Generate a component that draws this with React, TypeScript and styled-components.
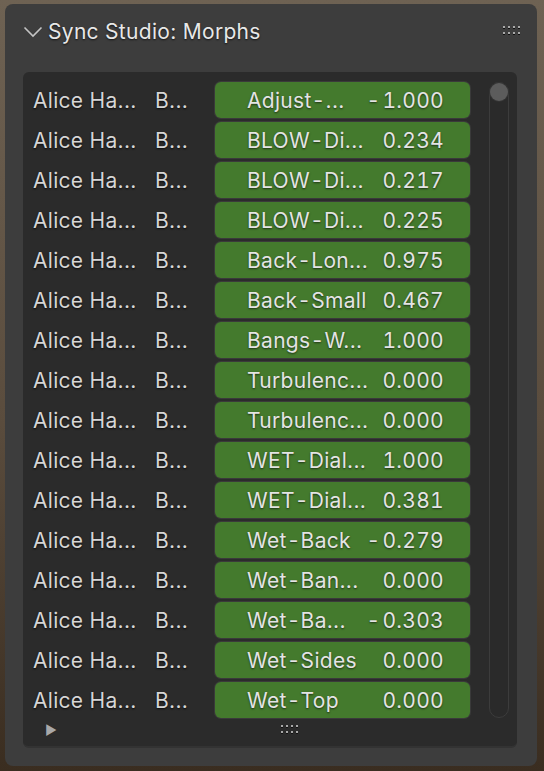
import React from 'react';
import styled, { createGlobalStyle } from 'styled-components';

type Morph = {
  name: string;
  value: string;
};

const morphs: Morph[] = [
  { name: 'Adjust-...', value: '-1.000' },
  { name: 'BLOW-Di...', value: '0.234' },
  { name: 'BLOW-Di...', value: '0.217' },
  { name: 'BLOW-Di...', value: '0.225' },
  { name: 'Back-Lon...', value: '0.975' },
  { name: 'Back-Small', value: '0.467' },
  { name: 'Bangs-W...', value: '1.000' },
  { name: 'Turbulenc...', value: '0.000' },
  { name: 'Turbulenc...', value: '0.000' },
  { name: 'WET-Dial...', value: '1.000' },
  { name: 'WET-Dial...', value: '0.381' },
  { name: 'Wet-Back', value: '-0.279' },
  { name: 'Wet-Ban...', value: '0.000' },
  { name: 'Wet-Ba...', value: '-0.303' },
  { name: 'Wet-Sides', value: '0.000' },
  { name: 'Wet-Top', value: '0.000' },
];

// Blender draws hyphens with a little extra room on both sides
const spaced = (text: string) =>
  text.split('-').map((part, i) => (
    <React.Fragment key={i}>
      {i > 0 && <Dash>-</Dash>}
      {part}
    </React.Fragment>
  ));

const GripDots: React.FC<{ cols: number }> = ({ cols }) => (
  <Grip>
    {Array.from({ length: cols * 2 }).map((_, i) => (
      <Dot key={i} />
    ))}
  </Grip>
);

const App: React.FC = () => {
  return (
    <>
      <GlobalStyle />
      <Panel>
        <Header>
          <Chevron width="20" height="12" viewBox="0 0 20 12">
            <polyline points="1.5,1.5 10,10 18.5,1.5" fill="none" stroke="#c4c4c4" strokeWidth="1.6" />
          </Chevron>
          <Title>Sync Studio: Morphs</Title>
          <GripDots cols={4} />
        </Header>
        <ListBox>
          <ListBody>
            <Rows>
              {morphs.map((m, i) => (
                <Row key={i}>
                  <Label>Alice Ha...</Label>
                  <Label>B...</Label>
                  <Slider>
                    <span>{spaced(m.name)}</span>
                    <Value>{spaced(m.value)}</Value>
                  </Slider>
                </Row>
              ))}
            </Rows>
            <ScrollTrack>
              <ScrollThumb />
            </ScrollTrack>
          </ListBody>
          <Footer>
            <Expand>▶</Expand>
            <GripDots cols={4} />
          </Footer>
        </ListBox>
      </Panel>
    </>
  );
};

const GlobalStyle = createGlobalStyle`
  html, body {
    margin: 0;
    padding: 0;
  }
  body {
    width: 544px;
    height: 771px;
    overflow: hidden;
    background: linear-gradient(180deg, #6e6253 0%, #5a4c3d 55%, #3a2d20 100%);
    font-family: Inter, "Noto Sans", sans-serif;
  }
`;

const Panel = styled.div`
  box-sizing: border-box;
  margin: 4px 0 0 5px;
  width: 532px;
  height: 762px;
  background: #3d3d3d;
  border-radius: 8px;
  padding: 0 20px 0 18px;
  display: flex;
  flex-direction: column;
`;

const Header = styled.div`
  height: 54px;
  display: flex;
  align-items: center;
  gap: 5px;
`;

const Chevron = styled.svg`
  margin-top: 2px;
  flex: none;
`;

const Title = styled.div`
  flex: 1;
  font-size: 21px;
  letter-spacing: 0.3px;
  color: #e8e8e8;
  text-shadow: 0 1px 2px rgba(0, 0, 0, 0.7);
`;

const Grip = styled.div`
  display: grid;
  grid-template-columns: repeat(4, 2px);
  column-gap: 3px;
  row-gap: 4px;
  margin-right: -3px;
  margin-top: -2px;
`;

const Dot = styled.span`
  width: 2px;
  height: 2px;
  background: #a8a8a8;
  box-shadow: 0 1px 0 #111;
`;

const ListBox = styled.div`
  margin-top: 14px;
  height: 676px;
  box-sizing: border-box;
  background: #2b2b2b;
  border-radius: 6px;
  border-bottom: 2px solid #333333;
  display: flex;
  flex-direction: column;
  padding: 10px 8px 0 10px;
`;

const ListBody = styled.div`
  display: flex;
  gap: 19px;
`;

const Rows = styled.div`
  flex: 1;
  display: flex;
  flex-direction: column;
  gap: 4px;
`;

const Row = styled.div`
  height: 36px;
  display: grid;
  grid-template-columns: 122px 60px 255px;
  align-items: center;
`;

const Label = styled.span`
  font-size: 21px;
  letter-spacing: 0.3px;
  color: #d6d6d6;
  text-shadow: 0 1px 2px rgba(0, 0, 0, 0.8);
  white-space: nowrap;
`;

const Slider = styled.div`
  box-sizing: border-box;
  height: 36px;
  background: #447a2d;
  border-radius: 6px;
  box-shadow: 0 0 0 1px #3a3a3a;
  display: flex;
  align-items: center;
  justify-content: space-between;
  padding: 0 26px 0 32px;
  font-size: 21px;
  letter-spacing: 0.3px;
  color: #e4e4e4;
  text-shadow: 0 1px 2px rgba(0, 0, 0, 0.6);
  white-space: nowrap;
`;

const Value = styled.span`
  font-variant-numeric: tabular-nums;
`;

const Dash = styled.span`
  margin: 0 2px;
`;

const ScrollTrack = styled.div`
  flex: none;
  width: 20px;
  height: 636px;
  box-sizing: border-box;
  border: 1px solid #3c3c3c;
  border-radius: 10px;
  background: #2a2a2a;
`;

const ScrollThumb = styled.div`
  width: 18px;
  height: 18px;
  border-radius: 50%;
  background: #5c5c5c;
  box-shadow: 0 0 0 1px #333;
`;

const Footer = styled.div`
  height: 24px;
  display: flex;
  align-items: center;
  padding-left: 12px;
  gap: 222px;
`;

const Expand = styled.span`
  font-size: 13px;
  color: #a8a8a8;
  width: 14px;
`;

export default App;
